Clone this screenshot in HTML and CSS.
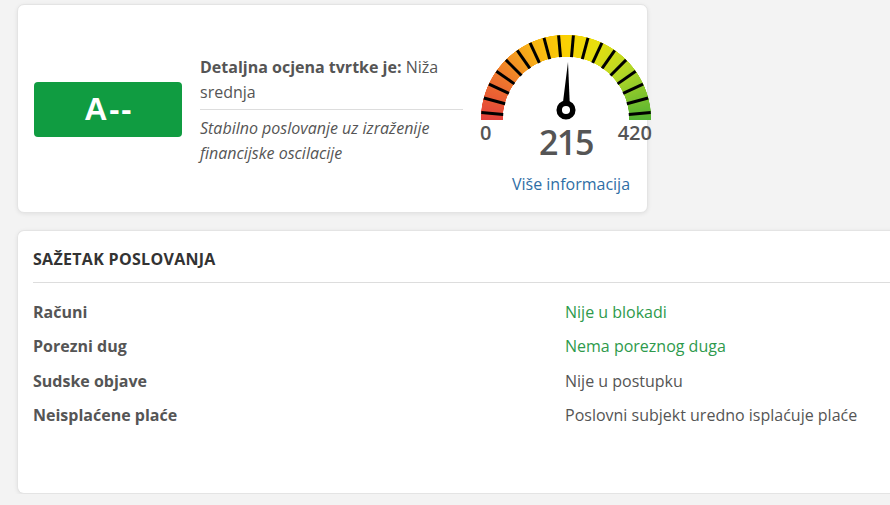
FILE: index.html
```html
<!DOCTYPE html>
<html lang="hr">
<head>
<meta charset="utf-8">
<title>Ocjena tvrtke</title>
<link rel="stylesheet" href="styles.css">
</head>
<body>
<div class="page">
  <section class="card rating">
    <div class="grade">A--</div>
    <div class="desc">
      <p class="desc-title"><strong>Detaljna ocjena tvrtke je:</strong> Niža srednja</p>
      <p class="desc-note">Stabilno poslovanje uz izraženije financijske oscilacije</p>
    </div>
    <div class="gauge">
      <div class="dial">
        <div class="band"></div>
        <svg class="marks" width="170" height="85" viewBox="0 0 170 85">
          <g stroke="#000" stroke-width="3">
            <line x1="0" y1="85" x2="22" y2="85" transform="rotate(5 85 85)"/>
            <line x1="0" y1="85" x2="22" y2="85" transform="rotate(15 85 85)"/>
            <line x1="0" y1="85" x2="22" y2="85" transform="rotate(25 85 85)"/>
            <line x1="0" y1="85" x2="22" y2="85" transform="rotate(35 85 85)"/>
            <line x1="0" y1="85" x2="22" y2="85" transform="rotate(45 85 85)"/>
            <line x1="0" y1="85" x2="22" y2="85" transform="rotate(55 85 85)"/>
            <line x1="0" y1="85" x2="22" y2="85" transform="rotate(65 85 85)"/>
            <line x1="0" y1="85" x2="22" y2="85" transform="rotate(75 85 85)"/>
            <line x1="0" y1="85" x2="22" y2="85" transform="rotate(85 85 85)"/>
            <line x1="0" y1="85" x2="22" y2="85" transform="rotate(95 85 85)"/>
            <line x1="0" y1="85" x2="22" y2="85" transform="rotate(105 85 85)"/>
            <line x1="0" y1="85" x2="22" y2="85" transform="rotate(115 85 85)"/>
            <line x1="0" y1="85" x2="22" y2="85" transform="rotate(125 85 85)"/>
            <line x1="0" y1="85" x2="22" y2="85" transform="rotate(135 85 85)"/>
            <line x1="0" y1="85" x2="22" y2="85" transform="rotate(145 85 85)"/>
            <line x1="0" y1="85" x2="22" y2="85" transform="rotate(155 85 85)"/>
            <line x1="0" y1="85" x2="22" y2="85" transform="rotate(165 85 85)"/>
            <line x1="0" y1="85" x2="22" y2="85" transform="rotate(175 85 85)"/>
          </g>
          <polygon points="87,27 89,75 81,75" fill="#000"/>
          <circle cx="85" cy="75" r="6.8" fill="#fff" stroke="#000" stroke-width="5.5"/>
        </svg>
      </div>
      <div class="scale">
        <span class="min">0</span>
        <span class="value">215</span>
        <span class="max">420</span>
      </div>
      <a class="more" href="#">Više informacija</a>
    </div>
  </section>

  <section class="card summary">
    <h2 class="summary-title">SAŽETAK POSLOVANJA</h2>
    <dl class="rows">
      <dt>Računi</dt><dd class="ok">Nije u blokadi</dd>
      <dt>Porezni dug</dt><dd class="ok">Nema poreznog duga</dd>
      <dt>Sudske objave</dt><dd>Nije u postupku</dd>
      <dt>Neisplaćene plaće</dt><dd>Poslovni subjekt uredno isplaćuje plaće</dd>
    </dl>
  </section>
</div>
</body>
</html>
```

FILE: styles.css
```css
html, body {
  margin: 0;
  padding: 0;
  background: #f3f3f3;
}
body {
  font-family: "Open Sans", "Noto Sans", sans-serif;
  color: #555;
  overflow: hidden;
}
.page {
  padding: 4px 0 0 17px;
  width: 900px;
}
.card {
  background: #fff;
  border: 1px solid #e4e4e4;
  border-radius: 7px;
  box-shadow: 0 1px 4px rgba(0,0,0,0.08);
  box-sizing: border-box;
}
.rating {
  width: 631px;
  height: 209px;
  display: flex;
  align-items: center;
  padding: 0 0 0 16px;
}
.grade {
  flex: 0 0 148px;
  height: 55px;
  margin-top: 1px;
  background: #109c41;
  border-radius: 4px;
  color: #fff;
  font-family: "Liberation Sans", Arial, sans-serif;
  font-weight: bold;
  font-size: 32px;
  letter-spacing: 1.5px;
  text-indent: 1.5px;
  display: flex;
  align-items: center;
  justify-content: center;
}
.desc {
  flex: 0 0 263px;
  margin-left: 18px;
  font-size: 16px;
  line-height: 25px;
  margin-top: 3px;
}
.desc p { margin: 0; }
.desc-title {
  padding-bottom: 4px;
  border-bottom: 1px solid #ddd;
}
.desc-title strong { font-weight: 700; }
.desc-note {
  font-style: italic;
  padding-top: 6px;
}
.gauge {
  flex: 0 0 172px;
  margin-left: 17px;
  align-self: flex-start;
  margin-top: 30px;
  display: flex;
  flex-direction: column;
  align-items: center;
}
.dial {
  position: relative;
  width: 170px;
  height: 85px;
}
.band {
  width: 170px;
  height: 85px;
  background: conic-gradient(from 270deg at 50% 100%, #e4403b 0deg, #ef7a2c 35deg, #f8b316 65deg, #fbd102 90deg, #e6df0e 112deg, #b5d826 140deg, #52b232 180deg, transparent 180deg);
  -webkit-mask: radial-gradient(circle at 50% 100%, transparent 63px, #000 63.5px, #000 85px, transparent 85.5px);
  mask: radial-gradient(circle at 50% 100%, transparent 63px, #000 63.5px, #000 85px, transparent 85.5px);
}
.marks {
  position: absolute;
  left: 0;
  top: 0;
  overflow: visible;
}
.scale {
  width: 172px;
  display: grid;
  grid-template-columns: 1fr auto 1fr;
  align-items: start;
  color: #555;
  margin-top: 0;
}
.min, .max {
  font-size: 20px;
  line-height: 26px;
  font-weight: 600;
}
.max { text-align: right; }
.value {
  font-size: 34px;
  line-height: 40px;
  font-weight: 600;
  letter-spacing: -1.5px;
  margin-top: 2px;
}
.more {
  color: #2f6ea5;
  text-decoration: none;
  font-size: 16px;
  line-height: 22px;
  margin-top: 11px;
  margin-left: 10px;
}
.summary {
  margin-top: 17px;
  width: 900px;
  height: 264px;
  border-right: none;
  padding-top: 15px;
}
.summary-title {
  margin: 0 0 0 15px;
  font-size: 16px;
  font-weight: 700;
  letter-spacing: 0.3px;
  color: #333;
  line-height: 26px;
  padding-bottom: 10px;
  border-bottom: 1px solid #ddd;
}
.rows {
  margin: 16px 0 0 15px;
  display: grid;
  grid-template-columns: 532px 1fr;
  row-gap: 8.3px;
  font-size: 16px;
  line-height: 26px;
}
.rows dt {
  font-weight: 700;
  color: #555;
}
.rows dd {
  margin: 0;
  color: #555;
}
.rows dd.ok {
  color: #2e9a4c;
}
```
